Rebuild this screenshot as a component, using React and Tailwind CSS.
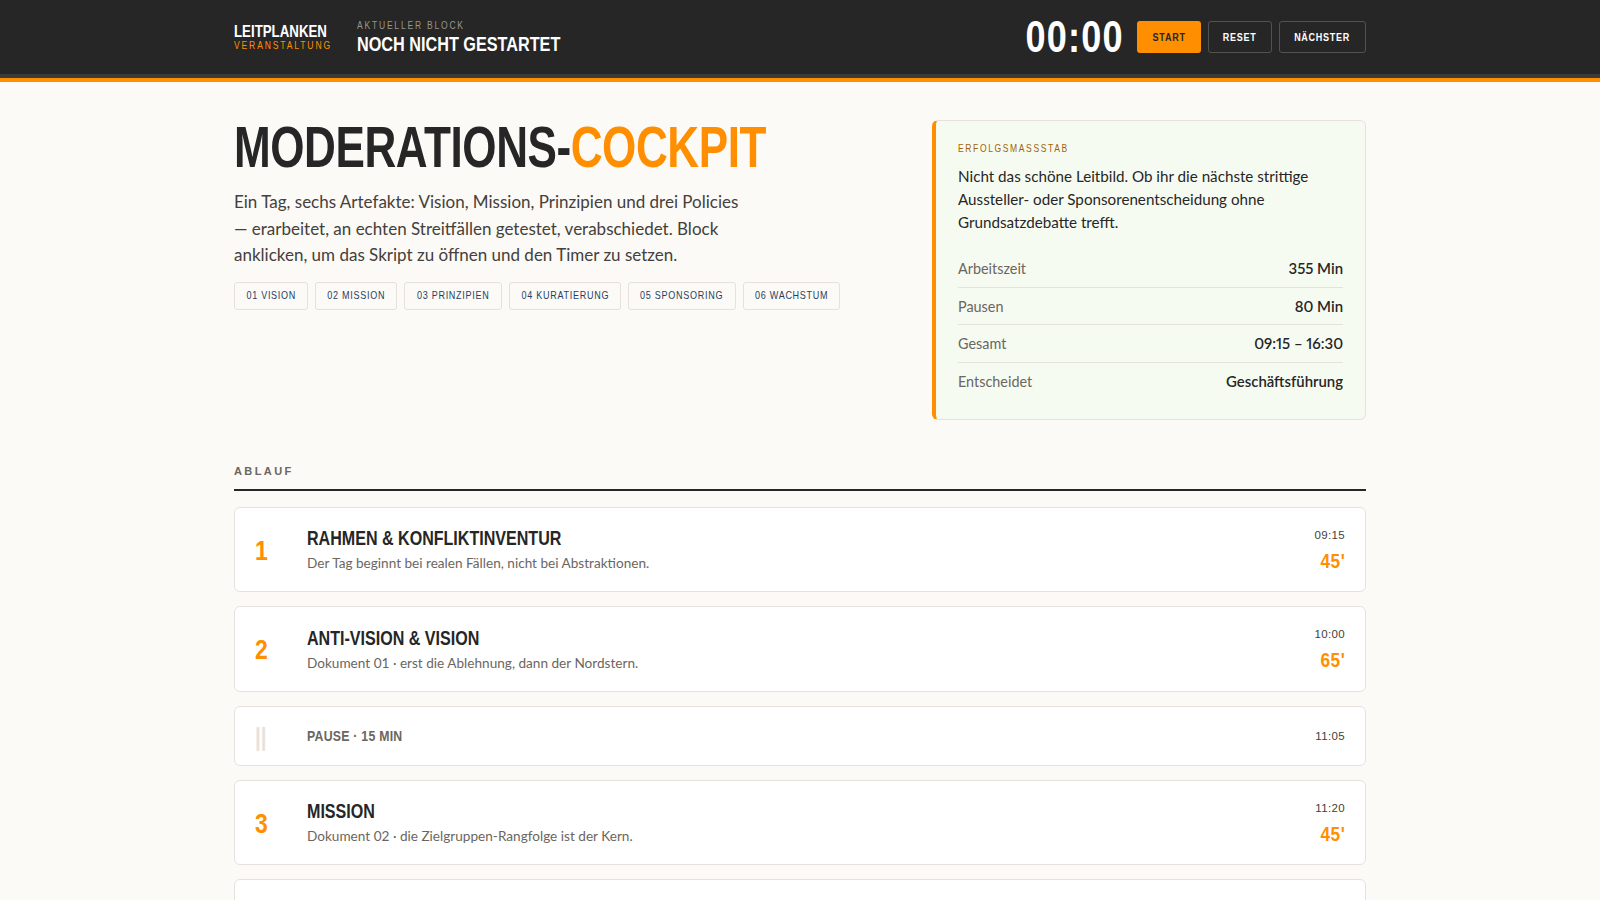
const PILLS = [
  ["01 Vision", "w-[74px]"],
  ["02 Mission", "w-[82px]"],
  ["03 Prinzipien", "w-[98px]"],
  ["04 Kuratierung", "w-[112px]"],
  ["05 Sponsoring", "w-[108px]"],
  ["06 Wachstum", "w-[97px]"],
];

const FACTS = [
  ["Arbeitszeit", "355 Min"],
  ["Pausen", "80 Min"],
  ["Gesamt", "09:15 – 16:30"],
  ["Entscheidet", "Geschäftsführung"],
];

const BLOCKS = [
  { n: "1", h: "h-[85px]", title: "Rahmen & Konfliktinventur", text: "Der Tag beginnt bei realen Fällen, nicht bei Abstraktionen.", time: "09:15", dur: "45'" },
  { n: "2", h: "h-[86px]", title: "Anti-Vision & Vision", text: "Dokument 01 · erst die Ablehnung, dann der Nordstern.", time: "10:00", dur: "65'" },
  { pause: true, title: "Pause · 15 Min", time: "11:05" },
  { n: "3", h: "h-[85px]", title: "Mission", text: "Dokument 02 · die Zielgruppen-Rangfolge ist der Kern.", time: "11:20", dur: "45'" },
  { pause: true, title: "Pause · 15 Min", time: "12:05" },
];

// no narrow face installed, so Liberation Sans gets squeezed
function Narrow({ children, className = "", origin = "origin-left" }) {
  return <span className={`inline-block scale-x-[0.82] whitespace-nowrap ${origin} ${className}`}>{children}</span>;
}

function Block({ b }) {
  if (b.pause) {
    return (
      <div className="flex h-[60px] items-center rounded-md border border-[#e5e2dc] bg-white px-5 font-['Liberation_Sans',sans-serif]">
        <div className="w-[52px] pt-[3px] text-[25px] font-bold leading-none text-[#e5e2dc]">
          <Narrow>||</Narrow>
        </div>
        <div className="flex-1 text-[15px] font-bold uppercase leading-5 tracking-[0.02em] text-[#6b6660]">
          <Narrow>{b.title}</Narrow>
        </div>
        <div className="text-[11.5px] tracking-[0.03em] text-[#44403c]">{b.time}</div>
      </div>
    );
  }
  return (
    <div className={`${b.h} flex items-center rounded-md border border-[#e5e2dc] bg-white px-5`}>
      <div className="w-[52px] pt-[2px] font-['Liberation_Sans',sans-serif] text-[28px] font-bold leading-none text-[#ff8f00]">
        <Narrow>{b.n}</Narrow>
      </div>
      <div className="flex-1 pb-px">
        <div className="font-['Liberation_Sans',sans-serif] text-[19.6px] font-bold uppercase leading-[26px] text-[#262626]">
          <Narrow>{b.title}</Narrow>
        </div>
        <div className="mt-[2px] text-[13.6px] leading-5 text-[#6b6660]">{b.text}</div>
      </div>
      <div className="text-right font-['Liberation_Sans',sans-serif]">
        <div className="text-[11.5px] tracking-[0.03em] text-[#44403c]">{b.time}</div>
        <div className="mt-[5px] text-[21px] font-bold leading-6 tracking-[0.03em] text-[#ff8f00]">
          <Narrow origin="origin-right">{b.dur}</Narrow>
        </div>
      </div>
    </div>
  );
}

export default function App() {
  return (
    <div className="min-h-screen bg-[#fbfaf6] font-['Lato',sans-serif] text-[#262626]">
      <header className="border-b-4 border-[#ff8f00] font-['Liberation_Sans',sans-serif]">
        <div className="h-[78px] border-b-4 border-[#3a3a38] bg-[#262626]">
          <div className="mx-auto flex h-[74px] max-w-[1132px] items-center">
            <div className="w-[123px] pb-[2px]">
              <div className="text-[16.2px] font-bold leading-5 text-white">
                <Narrow>LEITPLANKEN</Narrow>
              </div>
              <div className="-mt-px text-[10.4px] leading-3 tracking-[0.22em] text-[#ff8f00]">
                <Narrow>VERANSTALTUNG</Narrow>
              </div>
            </div>
            <div className="flex-1 pt-[2px]">
              <div className="text-[10.4px] leading-3 tracking-[0.21em] text-[#9a958c]">
                <Narrow>AKTUELLER BLOCK</Narrow>
              </div>
              <div className="text-[19.8px] font-bold leading-6 text-white">
                <Narrow>NOCH NICHT GESTARTET</Narrow>
              </div>
            </div>
            <div className="mr-[13px] text-[44px] font-bold leading-none tracking-[0.033em] text-white">
              <Narrow origin="origin-right">00:00</Narrow>
            </div>
            <div className="flex gap-[7px] text-[11px] font-bold tracking-[0.08em]">
              <button className="h-8 w-[64px] rounded-[3px] bg-[#ff8f00] text-[#262626]">
                <Narrow origin="origin-center">START</Narrow>
              </button>
              <button className="h-8 w-[64px] rounded-[3px] border border-[#525250] text-white">
                <Narrow origin="origin-center">RESET</Narrow>
              </button>
              <button className="h-8 w-[87px] rounded-[3px] border border-[#525250] text-white">
                <Narrow origin="origin-center">NÄCHSTER</Narrow>
              </button>
            </div>
          </div>
        </div>
      </header>

      <main className="mx-auto max-w-[1132px] pt-[38px]">
        <section className="grid grid-cols-[minmax(0,1fr)_434px] gap-8">
          <div>
            <h1 className="-mt-[5px] font-['Liberation_Sans',sans-serif] text-[58px] font-bold leading-[1.1] tracking-[-0.01em]">
              <span className="inline-block origin-left scale-x-[0.76] whitespace-nowrap">
                MODERATIONS-<span className="text-[#ff8f00]">COCKPIT</span>
              </span>
            </h1>
            <p className="mt-[10.5px] max-w-[520px] text-[17px] leading-[26.5px] text-[#44403c]">
              Ein Tag, sechs Artefakte: Vision, Mission, Prinzipien und drei Policies — erarbeitet, an echten Streitfällen getestet, verabschiedet. Block anklicken, um das Skript zu öffnen und den Timer zu setzen.
            </p>
            <div className="mt-[13px] flex gap-[7px] font-['Liberation_Sans',sans-serif]">
              {PILLS.map(([p, w]) => (
                <span key={p} className={`${w} flex h-7 items-center justify-center rounded-[3px] border border-[#e5e2dc] pb-px text-[11px] uppercase tracking-[0.08em] text-[#1f3f66]`}>
                  <Narrow origin="origin-center">{p}</Narrow>
                </span>
              ))}
            </div>
          </div>
          <aside className="rounded-md border border-l-4 border-[#e5e2dc] border-l-[#ff8f00] bg-[#f6fbf2] px-[22px] pb-[19px] pt-[22px]">
            <div className="font-['Liberation_Sans',sans-serif] text-[10.4px] leading-3 tracking-[0.19em] text-[#a16207]">
              <Narrow>ERFOLGSMASSSTAB</Narrow>
            </div>
            <p className="mt-[10px] text-[15.2px] leading-[23px] text-[#262626]">
              Nicht das schöne Leitbild. Ob ihr die nächste strittige Aussteller- oder Sponsorenentscheidung ohne Grundsatzdebatte trefft.
            </p>
            <dl className="mt-4 text-[14.4px]">
              {FACTS.map(([k, v], i) => (
                <div key={k} className={`flex justify-between py-2 leading-[20.7px] ${i < FACTS.length - 1 ? "border-b border-[#e5e2dc]" : ""}`}>
                  <dt className="-mb-px pt-px text-[#6b6660]">{k}</dt>
                  <dd className="text-[14.9px] font-semibold proportional-nums">{v}</dd>
                </div>
              ))}
            </dl>
          </aside>
        </section>

        <h2 className="mt-[43px] border-b-2 border-[#262626] pb-[10px] font-['Liberation_Sans',sans-serif] text-[11px] font-bold uppercase tracking-[0.22em] text-[#6b6660]">Ablauf</h2>
        <div className="mt-4 flex flex-col gap-[14px] pb-10">
          {BLOCKS.map((b, i) => (
            <Block key={i} b={b} />
          ))}
        </div>
      </main>
    </div>
  );
}
